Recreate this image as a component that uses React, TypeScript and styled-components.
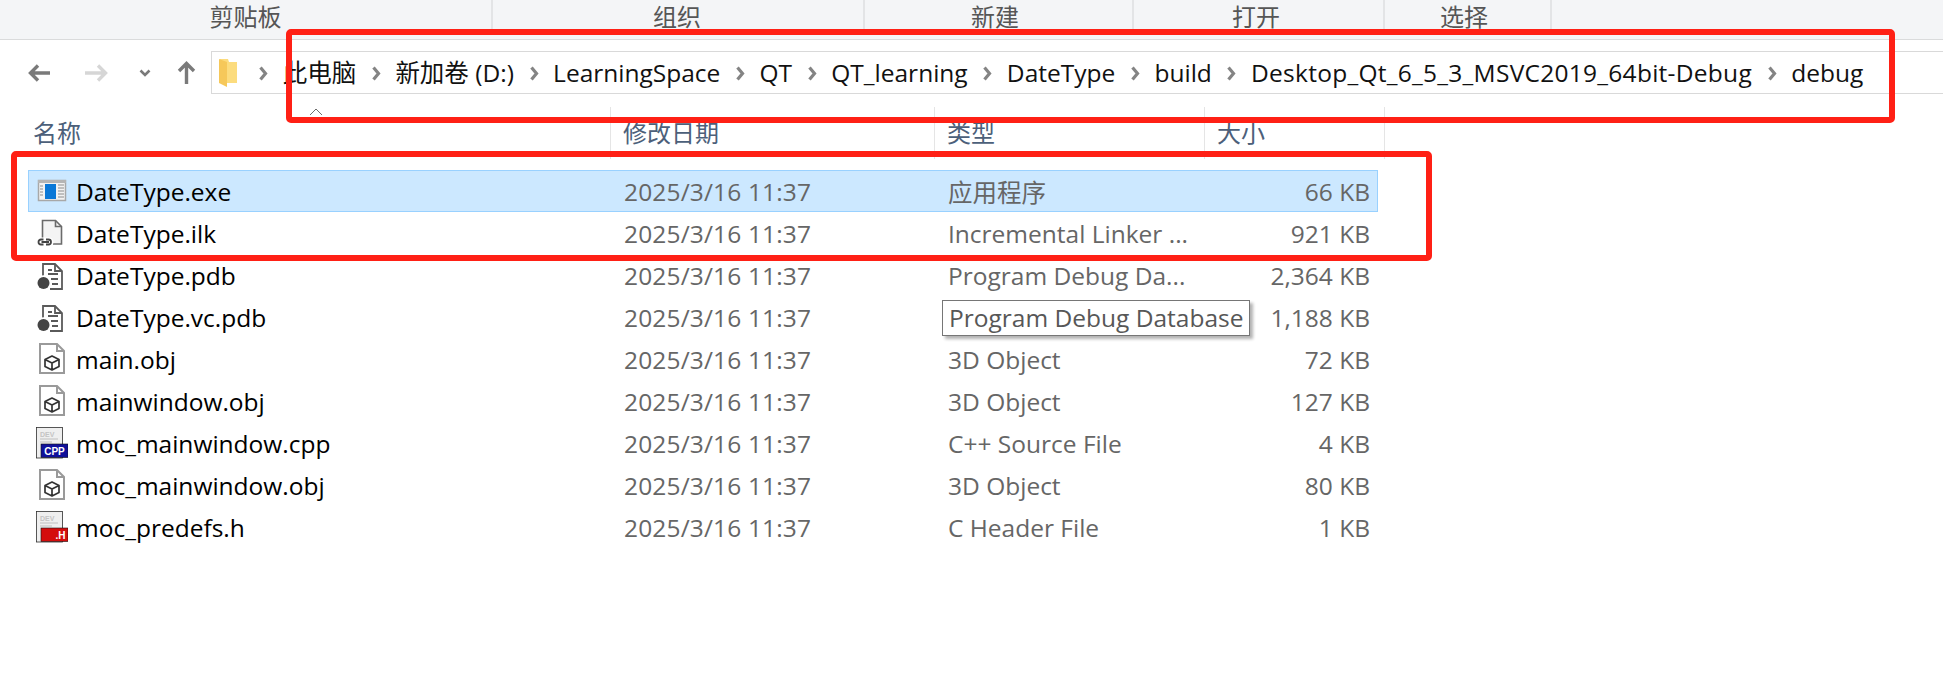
import React from 'react';
import styled, { createGlobalStyle } from 'styled-components';

const FONT = '"Open Sans", "Noto Sans CJK SC", sans-serif';

const GlobalStyle = createGlobalStyle`
  html, body {
    margin: 0;
    padding: 0;
    background: #ffffff;
    font-family: ${FONT};
  }
`;

const Page = styled.div`
  position: relative;
  width: 1943px;
  height: 693px;
  overflow: hidden;
  background: #ffffff;
`;

const Ribbon = styled.div`
  display: flex;
  height: 39px;
  background: #f4f5f7;
  border-bottom: 1px solid #dadbdc;
`;

const RibbonGroup = styled.div<{ $w: number; $nudge: number }>`
  width: ${(p) => p.$w}px;
  height: 32px;
  box-sizing: border-box;
  border-right: 2px solid #e3e4e6;
  padding-right: ${(p) => p.$nudge}px;
  display: flex;
  align-items: flex-start;
  justify-content: center;
  font-size: 24px;
  line-height: 34px;
  color: #565656;
`;

const NavRow = styled.div`
  display: flex;
  align-items: center;
  height: 43px;
  margin-top: 11px;
`;

const NavButtons = styled.div`
  width: 211px;
  height: 43px;
  flex: none;
  display: flex;
  align-items: center;
`;

const NavIcon = styled.svg<{ $mx: number }>`
  display: block;
  flex: none;
  margin-left: ${(p) => p.$mx}px;
`;

const AddressBar = styled.div`
  width: 1732px;
  height: 43px;
  box-sizing: border-box;
  border: 1px solid #d9d9d9;
  border-right: none;
  display: flex;
  align-items: center;
  padding-left: 7px;
  font-size: 24.5px;
  color: #111111;
  white-space: nowrap;
`;

const Crumb = styled.span<{ $track?: number }>`
  display: block;
  line-height: 41px;
  letter-spacing: ${(p) => p.$track ?? 0}px;
`;

const CrumbSep = styled.svg`
  display: block;
  flex: none;
  margin: 1px 14.600px 0;
`;

const FolderWrap = styled.svg`
  display: block;
  flex: none;
  margin-right: 6.500px;
`;

const HeaderRow = styled.div`
  display: grid;
  grid-template-columns: 611px 324px 270px 180px;
  height: 44px;
  margin-top: 13px;
  color: #4c607a;
  font-size: 24px;
  position: relative;
`;

const HeaderCell = styled.div<{ $pad: number }>`
  box-sizing: border-box;
  border-right: 1px solid #e5e5e5;
  padding-left: ${(p) => p.$pad}px;
  line-height: 52px;
`;

const SortCaret = styled.svg`
  position: absolute;
  left: 309px;
  top: 1px;
`;

const List = styled.div`
  display: flex;
  flex-direction: column;
  margin: 19px 0 0 28px;
  width: 1350px;
`;

const Row = styled.div<{ $selected?: boolean }>`
  display: grid;
  grid-template-columns: 596px 324px 270px 1fr;
  align-items: center;
  height: 42px;
  box-sizing: border-box;
  font-size: 24.500px;
  color: #666666;
  background: ${(p) => (p.$selected ? '#cce8ff' : 'transparent')};
  outline: ${(p) => (p.$selected ? '1px solid #99d1ff' : 'none')};
  outline-offset: -1px;
  white-space: nowrap;
`;

const Cell = styled.div`
  padding-top: 1px;
`;

const DateCell = styled(Cell)`
  letter-spacing: 0.15px;
`;

const NameCell = styled.div`
  display: flex;
  align-items: center;
  color: #000000;
  padding-left: 8px;
`;

const NameText = styled.span`
  display: block;
  padding-top: 1px;
`;

const FileIconBox = styled.svg`
  display: block;
  flex: none;
  width: 32px;
  height: 32px;
  margin-right: 8px;
`;

const SizeCell = styled(Cell)`
  text-align: right;
  padding-right: 8px;
`;

const Highlight = styled.div<{ $l: number; $t: number; $w: number; $h: number }>`
  position: absolute;
  left: ${(p) => p.$l}px;
  top: ${(p) => p.$t}px;
  width: ${(p) => p.$w}px;
  height: ${(p) => p.$h}px;
  box-sizing: border-box;
  border: 6px solid #ff2015;
  border-radius: 5px;
`;

const Tooltip = styled.div`
  position: absolute;
  left: 942px;
  top: 300px;
  width: 308px;
  height: 36px;
  box-sizing: border-box;
  border: 1px solid #767676;
  background: #ffffff;
  box-shadow: 3px 3px 3px rgba(0, 0, 0, 0.3);
  padding-left: 6px;
  font-size: 24.500px;
  line-height: 34px;
  color: #575757;
  white-space: nowrap;
`;

const ExeIcon = () => (
  <FileIconBox viewBox="0 0 32 32">
    <rect x="2.500" y="5.500" width="27" height="20" fill="#f2f2f2" stroke="#a8a8a8" strokeWidth="1.500" />
    <rect x="2" y="5" width="28" height="3" fill="#b5b5b5" />
    <rect x="9" y="9" width="11" height="15" fill="#0a78d7" />
    <path d="M4 11h3M4 14h3M4 17h3M4 20h3M22 10h6M22 13h6M22 16h6M22 19h6M22 22h6" stroke="#8c8c8c" strokeWidth="1.200" />
  </FileIconBox>
);

const IlkIcon = () => (
  <FileIconBox viewBox="0 0 32 32">
    <path d="M6.500 21V3.500h13l6 6V27H17" fill="#f4f4f4" stroke="#6b6b6b" strokeWidth="1.600" />
    <path d="M19.500 3.500v6h6" fill="none" stroke="#6b6b6b" strokeWidth="1.600" />
    <rect x="0.500" y="20.500" width="17" height="9" rx="4.500" fill="#ffffff" />
    <path d="M7.500 22.500H5a2.300 2.300 0 0 0 0 5h2.500M10 22.500h2.500a2.300 2.300 0 0 1 0 5H10M5.500 25h7.500" fill="none" stroke="#444444" strokeWidth="1.800" />
  </FileIconBox>
);

const PdbIcon = () => (
  <FileIconBox viewBox="0 0 32 32">
    <path d="M7 18V5h12l7 7v18H14" fill="#ffffff" stroke="#5a5a5a" strokeWidth="1.800" />
    <path d="M19 5v7h7M12 11h4M12 15h10M15 20h7M16 25h6" fill="none" stroke="#5a5a5a" strokeWidth="1.800" />
    <circle cx="7.500" cy="24" r="7.800" fill="#ffffff" />
    <circle cx="7.500" cy="24" r="6" fill="#444444" />
  </FileIconBox>
);

const ObjIcon = () => (
  <FileIconBox viewBox="0 0 32 32">
    <path d="M4 1h17l7 7v22H4z" fill="#ffffff" stroke="#9a9a9a" strokeWidth="2" />
    <path d="M21 1v7h7" fill="none" stroke="#9a9a9a" strokeWidth="2" />
    <path d="M16 13l7 3.500v7L16 27l-7-3.500v-7zM9 16.500l7 3.500 7-3.500M16 20v7" fill="none" stroke="#333333" strokeWidth="1.700" strokeLinejoin="round" />
  </FileIconBox>
);

const SourceIcon = ({ label, fill, small }: { label: string; fill: string; small?: boolean }) => (
  <FileIconBox viewBox="0 0 32 32">
    <rect x="0.500" y="0.500" width="26" height="30.500" fill="#efefef" stroke="#2e2e2e" strokeWidth="0.800" />
    <text x="4" y="9.500" fontSize="7" fontFamily="Liberation Sans, sans-serif" fontWeight="700" fill="#c4c4c4">DEV</text>
    <path d="M4 12h18M4 15h12" stroke="#d0d0d0" strokeWidth="1.500" />
    <rect x="5" y="17" width="27" height="13.500" fill={fill} stroke="#111111" strokeWidth="0.600" />
    <text x={small ? 29.5 : 18.5} y="27.500" fontSize="10" fontFamily="Liberation Sans, sans-serif" fontWeight="700" fill="#ffffff" textAnchor={small ? 'end' : 'middle'}>{label}</text>
  </FileIconBox>
);

type FileRow = { name: string; type: string; size: string; icon: React.ReactNode; selected?: boolean };

const FILES: FileRow[] = [
  { name: 'DateType.exe', type: '应用程序', size: '66 KB', icon: <ExeIcon />, selected: true },
  { name: 'DateType.ilk', type: 'Incremental Linker ...', size: '921 KB', icon: <IlkIcon /> },
  { name: 'DateType.pdb', type: 'Program Debug Da...', size: '2,364 KB', icon: <PdbIcon /> },
  { name: 'DateType.vc.pdb', type: '', size: '1,188 KB', icon: <PdbIcon /> },
  { name: 'main.obj', type: '3D Object', size: '72 KB', icon: <ObjIcon /> },
  { name: 'mainwindow.obj', type: '3D Object', size: '127 KB', icon: <ObjIcon /> },
  { name: 'moc_mainwindow.cpp', type: 'C++ Source File', size: '4 KB', icon: <SourceIcon label="CPP" fill="#10109a" /> },
  { name: 'moc_mainwindow.obj', type: '3D Object', size: '80 KB', icon: <ObjIcon /> },
  { name: 'moc_predefs.h', type: 'C Header File', size: '1 KB', icon: <SourceIcon label=".H" fill="#d40d0d" small /> },
];

const RIBBON = [
  { label: '剪贴板', w: 493, nudge: 0 },
  { label: '组织', w: 372, nudge: 2 },
  { label: '新建', w: 269, nudge: 7 },
  { label: '打开', w: 251, nudge: 5 },
  { label: '选择', w: 167, nudge: 7 },
];

const CRUMBS = ['此电脑', '新加卷 (D:)', 'LearningSpace', 'QT', 'QT_learning', 'DateType', 'build', 'Desktop_Qt_6_5_3_MSVC2019_64bit-Debug', 'debug'];

const Chevron = () => (
  <CrumbSep width="10" height="15" viewBox="0 0 10 15">
    <path d="M2.500 1.500l5 6-5 6" fill="none" stroke="#848484" strokeWidth="3.200" />
  </CrumbSep>
);

export default function App() {
  return (
    <Page>
      <GlobalStyle />
      <Ribbon>
        {RIBBON.map((g) => (
          <RibbonGroup key={g.label} $w={g.w} $nudge={g.nudge}>{g.label}</RibbonGroup>
        ))}
      </Ribbon>

      <NavRow>
        <NavButtons>
          <NavIcon $mx={27} width="23" height="18" viewBox="0 0 23 18">
            <path d="M23 9H4M11 1.500L3.500 9l7.500 7.500" fill="none" stroke="#7a7a7a" strokeWidth="3.400" />
          </NavIcon>
          <NavIcon $mx={35} width="24" height="18" viewBox="0 0 24 18">
            <path d="M0 9h20M13 1.500L20.500 9 13 16.500" fill="none" stroke="#d6d6d6" strokeWidth="3.400" />
          </NavIcon>
          <NavIcon $mx={30} width="12" height="8" viewBox="0 0 12 8">
            <path d="M1.500 1.500L6 6l4.500-4.500" fill="none" stroke="#7a7a7a" strokeWidth="2.600" />
          </NavIcon>
          <NavIcon $mx={26} width="19" height="23" viewBox="0 0 19 23">
            <path d="M9.500 23V3M2 10l7.500-7.500L17 10" fill="none" stroke="#7a7a7a" strokeWidth="3.400" />
          </NavIcon>
        </NavButtons>
        <AddressBar>
          <FolderWrap width="18" height="28" viewBox="0 0 18 28">
            <path d="M1 0h8l1 3h8v21H5l-4-2z" fill="#fcdc7e" />
            <path d="M0 0l8 3v25l-8-4z" fill="#f6c85a" />
          </FolderWrap>
          <Chevron />
          {CRUMBS.map((c, i) => (
            <React.Fragment key={c}>
              <Crumb $track={c.startsWith('Desktop') ? 0.27 : 0}>{c}</Crumb>
              {i < CRUMBS.length - 1 && <Chevron />}
            </React.Fragment>
          ))}
        </AddressBar>
      </NavRow>

      <HeaderRow>
        <HeaderCell $pad={33}>名称</HeaderCell>
        <HeaderCell $pad={12}>修改日期</HeaderCell>
        <HeaderCell $pad={12}>类型</HeaderCell>
        <HeaderCell $pad={12}>大小</HeaderCell>
        <SortCaret width="14" height="8" viewBox="0 0 14 8">
          <path d="M1 7l6-6 6 6" fill="none" stroke="#6d6d6d" strokeWidth="1" />
        </SortCaret>
      </HeaderRow>

      <List>
        {FILES.map((f) => (
          <Row key={f.name} $selected={f.selected}>
            <NameCell>{f.icon}<NameText>{f.name}</NameText></NameCell>
            <DateCell>2025/3/16 11:37</DateCell>
            <Cell>{f.type}</Cell>
            <SizeCell>{f.size}</SizeCell>
          </Row>
        ))}
      </List>

      <Tooltip>Program Debug Database</Tooltip>
      <Highlight $l={286} $t={29} $w={1609} $h={94} />
      <Highlight $l={11} $t={151} $w={1421} $h={110} />
    </Page>
  );
}
